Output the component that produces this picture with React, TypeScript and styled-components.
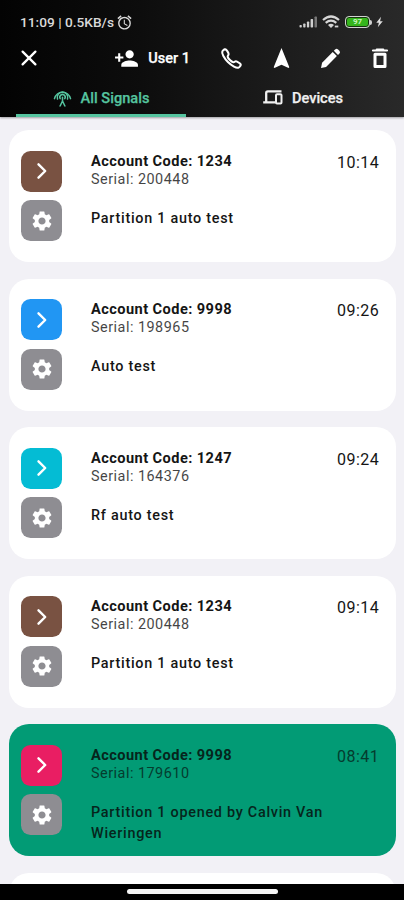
import React from "react";
import styled, { createGlobalStyle } from "styled-components";
import { MdAlarm, MdNavigation, MdPersonAdd, MdSettings } from "react-icons/md";
import { IoCallOutline } from "react-icons/io5";

const GlobalStyle = createGlobalStyle`
  *, *::before, *::after { box-sizing: border-box; }
  body { margin: 0; background: #f2f1f6; font-family: Roboto, "Liberation Sans", sans-serif; overflow: hidden; }
`;

const Screen = styled.div`
  height: 900px;
  width: 404px;
  display: flex;
  flex-direction: column;
  overflow: hidden;
  background: #f2f1f6;
`;

const Header = styled.header`
  flex: none;
  height: 117px;
  display: flex;
  flex-direction: column;
  color: #fff;
  background: linear-gradient(90deg, #030303 0%, #0d0d0d 35%, #292929 100%);
  box-shadow: 0 1px 2px rgba(0, 0, 0, 0.35);
  z-index: 1;
`;

const StatusBar = styled.div`
  height: 38px;
  padding: 6px 21px 0 20px;
  display: flex;
  align-items: center;
  color: #d9d9d9;
  font-size: 13.7px;
  font-weight: 500;
  white-space: pre;
`;

const StatusText = styled.span`
  width: 96px;
`;

const StatusIcons = styled.div`
  margin-left: auto;
  display: flex;
  align-items: center;
`;

const SignalStrength = styled.span`
  display: flex;
  margin-right: 4px;
`;

const Battery = styled.span`
  width: 25px;
  height: 12px;
  margin-left: 5px;
  border: 1.5px solid #d2d2d2;
  border-radius: 4px;
  background: #35b51c;
  box-shadow: inset 0 0 0 1px #17330f;
  display: flex;
  align-items: center;
  justify-content: center;
  font-size: 8px;
  font-weight: 700;
  line-height: 8px;
  color: #c9f5bd;
`;

const BatteryTip = styled.span`
  width: 2px;
  height: 5px;
  margin-right: 4px;
  border-radius: 0 2px 2px 0;
  background: #cfcfcf;
`;

const Toolbar = styled.div`
  height: 40px;
  display: grid;
  grid-template-columns: 58px 148px 50px 50px 49px 49px;
  align-items: center;
  justify-items: center;
`;

const UserButton = styled.div`
  justify-self: end;
  padding-right: 16px;
  display: flex;
  align-items: center;
  gap: 9px;
  font-size: 14.5px;
  font-weight: 500;
  white-space: nowrap;
  -webkit-text-stroke: 0.25px;
`;

const CallIcon = styled(IoCallOutline)`
  width: 23px;
  height: 23px;

  path {
    stroke-width: 46px;
  }
`;

const Tabs = styled.nav`
  flex: 1;
  display: grid;
  grid-template-columns: 1fr 1fr;
`;

const Tab = styled.div<{ $active?: boolean }>`
  margin: 0 16px;
  padding-top: 3px;
  display: flex;
  align-items: center;
  justify-content: center;
  gap: 9px;
  color: ${(p) => (p.$active ? "#55c49f" : "#f0f0f0")};
  border-bottom: 3px solid ${(p) => (p.$active ? "#55c49f" : "transparent")};
  font-size: 14.6px;
  font-weight: 500;
  white-space: nowrap;
  -webkit-text-stroke: 0.25px;
`;

const SignalList = styled.main`
  flex: 1;
  min-height: 0;
  overflow: hidden;
  padding: 13px 8px 0 9px;
  display: flex;
  flex-direction: column;
  gap: 16.5px;
`;

const Card = styled.article<{ $opened?: boolean }>`
  flex: none;
  height: 132px;
  padding: 20.5px 16.5px 0 12px;
  border-radius: 20px;
  background: ${(p) => (p.$opened ? "#029b75" : "#fff")};
  color: ${(p) => (p.$opened ? "#06251c" : "#151515")};
  display: grid;
  grid-template-columns: 70px minmax(0, 1fr) auto;
`;

const Badges = styled.div`
  display: flex;
  flex-direction: column;
  gap: 8.5px;
`;

const Badge = styled.span<{ $color: string }>`
  width: 41px;
  height: 41px;
  border-radius: 9.5px;
  background: ${(p) => p.$color};
  color: #fff;
  display: flex;
  align-items: center;
  justify-content: center;
`;

const Details = styled.div`
  padding-top: 1px;
`;

const Account = styled.div`
  font-size: 14.6px;
  line-height: 18px;
  font-weight: 700;
  letter-spacing: 0.43px;
  white-space: nowrap;
`;

const Serial = styled.div`
  padding-top: 1px;
  font-size: 14.4px;
  line-height: 18px;
  letter-spacing: 0.5px;
  opacity: 0.8;
`;

const Message = styled.div`
  margin-top: 19px;
  font-size: 14.4px;
  line-height: 21px;
  font-weight: 500;
  letter-spacing: 0.73px;
`;

const Time = styled.time<{ $opened?: boolean }>`
  width: 42.5px;
  padding-top: 2px;
  font-size: 16px;
  line-height: 20px;
  letter-spacing: 0.5px;
  opacity: ${(p) => (p.$opened ? 0.8 : 1)};
`;

const NavigationBar = styled.footer`
  flex: none;
  height: 16px;
  padding-top: 4.5px;
  background: #000;
  display: flex;
  justify-content: center;
`;

const HomeHandle = styled.span`
  width: 151px;
  height: 5px;
  border-radius: 3px;
  background: #f5f5f5;
`;

const CellularIcon = () => (
  <svg width="19" height="12" viewBox="0 0 19 12" fill="#cfcfcf">
    <rect x="0.5" y="9" width="2.3" height="2.5" rx="0.7" />
    <rect x="4.2" y="7.5" width="2.3" height="4" rx="0.7" />
    <rect x="7.9" y="5.5" width="2.3" height="6" rx="0.7" />
    <rect x="11.6" y="3" width="2.5" height="8.5" rx="0.7" />
    <rect x="15.5" y="0.5" width="2.5" height="11" rx="0.7" fill="#777" />
  </svg>
);

const WifiIcon = () => (
  <svg width="18" height="14" viewBox="0 0 18 14" fill="none" stroke="#d6d6d6" strokeWidth="2.2">
    <path d="M1 5Q9-2 17 5M3.7 7.8q5.3-4.4 10.6 0" />
    <path d="M6 10q3-2.4 6 0l-3 3z" fill="#d6d6d6" stroke="none" />
    <path d="M12.8 11.5h3.5" strokeWidth="1.8" />
  </svg>
);

const ChargeIcon = () => (
  <svg width="7" height="12" viewBox="0 0 7 12" fill="#dedede">
    <path d="M5 0.8 0.3 6.7h2.6L1.8 11.2 6.8 5.2H4.1z" />
  </svg>
);

const CloseIcon = () => (
  <svg width="18" height="18" viewBox="0 0 18 18" stroke="currentColor" strokeWidth="2.3" strokeLinecap="round">
    <path d="M2.6 2.6 15.4 15.4M15.4 2.6 2.6 15.4" />
  </svg>
);

const PencilIcon = () => (
  <svg width="21" height="21" viewBox="0 0 21 21" fill="currentColor">
    <path d="M12.7 3.9 16.9 8.1 6.1 18.9 1 20l1.1-5.3z" />
    <path d="M13.8 2.8 15.2 1.4a2 2 0 0 1 2.8 0l1.4 1.4a2 2 0 0 1 0 2.8L18 7z" />
  </svg>
);

const TrashIcon = () => (
  <svg width="18" height="21" viewBox="0 0 18 21" fill="none" stroke="currentColor" strokeLinejoin="round">
    <path d="M2 2.5h14M5.8 1.6h6.4" strokeWidth="2.2" strokeLinecap="round" />
    <path d="M4 6.2h10v12.2H4z" strokeWidth="3" />
  </svg>
);

const DevicesIcon = () => (
  <svg width="20" height="15" viewBox="0 0 20 15" fill="none" stroke="currentColor">
    <path d="M3.2 12V3q0-1.6 1.6-1.6h13.7M0.2 12.4h12.4" strokeWidth="2.3" />
    <rect x="13" y="4.2" width="5.5" height="9.2" rx="1" strokeWidth="2" />
  </svg>
);

const ChevronIcon = () => (
  <svg width="12" height="20" viewBox="0 0 12 20" fill="none" stroke="currentColor" strokeWidth="2.4" strokeLinecap="round" strokeLinejoin="round">
    <path d="M2.5 3.3 9.2 10 2.5 16.7" />
  </svg>
);

const AntennaIcon = () => (
  <svg width="19" height="19" viewBox="0 0 19 19" fill="none" stroke="currentColor" strokeWidth="1.55" strokeLinecap="round" strokeLinejoin="round">
    <path d="M1.5 10.6A8.2 8.2 0 0 1 17.5 10.6" />
    <path d="M4.5 11A5.3 5.3 0 1 1 14.5 11" />
    <path d="M7.2 10.6A2.7 2.7 0 1 1 11.8 10.6" />
    <path d="M9.5 9.2v3.9M9.5 13 7.1 18M9.5 13l2.4 5" />
  </svg>
);

interface Signal {
  account: string;
  serial: string;
  message: string;
  time: string;
  color: string;
  opened?: boolean;
}

const signals: Signal[] = [
  { account: "1234", serial: "200448", message: "Partition 1 auto test", time: "10:14", color: "#795242" },
  { account: "9998", serial: "198965", message: "Auto test", time: "09:26", color: "#2196f3" },
  { account: "1247", serial: "164376", message: "Rf auto test", time: "09:24", color: "#04bcd4" },
  { account: "1234", serial: "200448", message: "Partition 1 auto test", time: "09:14", color: "#795242" },
  { account: "9998", serial: "179610", message: "Partition 1 opened by Calvin Van Wieringen", time: "08:41", color: "#e91e63", opened: true },
];

const SignalCard = ({ signal }: { signal: Signal }) => (
  <Card $opened={signal.opened}>
    <Badges>
      <Badge $color={signal.color}><ChevronIcon /></Badge>
      <Badge $color="#8e8d92"><MdSettings size={24} /></Badge>
    </Badges>
    <Details>
      <Account>Account Code: {signal.account}</Account>
      <Serial>Serial: {signal.serial}</Serial>
      <Message>{signal.message}</Message>
    </Details>
    <Time $opened={signal.opened}>{signal.time}</Time>
  </Card>
);

export default function App() {
  return (
    <>
      <GlobalStyle />
      <Screen>
        <Header>
          <StatusBar>
            <StatusText>11:09 | 0.5KB/s</StatusText>
            <MdAlarm size={17} />
            <StatusIcons>
              <SignalStrength><CellularIcon /></SignalStrength>
              <WifiIcon />
              <Battery>97</Battery>
              <BatteryTip />
              <ChargeIcon />
            </StatusIcons>
          </StatusBar>
          <Toolbar>
            <CloseIcon />
            <UserButton>
              <MdPersonAdd size={25} />
              User 1
            </UserButton>
            <CallIcon />
            <MdNavigation size={25} />
            <PencilIcon />
            <TrashIcon />
          </Toolbar>
          <Tabs>
            <Tab $active><AntennaIcon />All Signals</Tab>
            <Tab><DevicesIcon />Devices</Tab>
          </Tabs>
        </Header>
        <SignalList>
          {signals.map((signal) => <SignalCard key={signal.time} signal={signal} />)}
          <Card />
        </SignalList>
        <NavigationBar><HomeHandle /></NavigationBar>
      </Screen>
    </>
  );
}
